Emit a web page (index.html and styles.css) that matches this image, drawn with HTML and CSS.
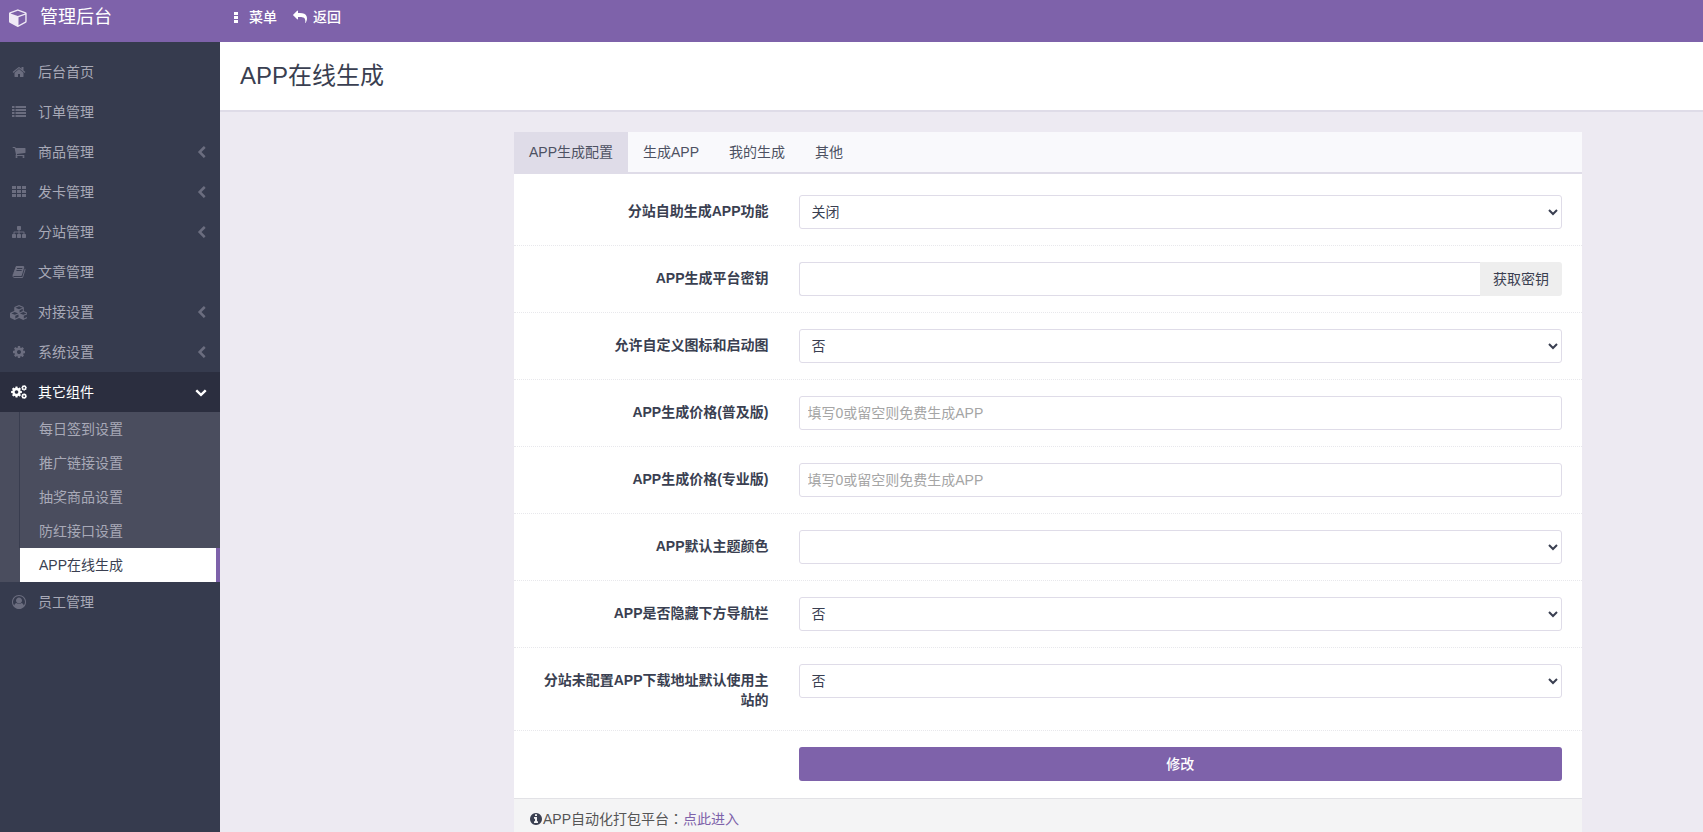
FILE: index.html
```html
<!DOCTYPE html>
<html lang="zh-CN">
<head>
<meta charset="utf-8">
<title>APP在线生成</title>
<link rel="stylesheet" href="styles.css">
</head>
<body>
<svg class="sprite" aria-hidden="true">
  <symbol id="i-cube" viewBox="0 0 1792 1792"><path d="M896 1629l640-349v-636l-640 233v752zm-64-865l698-254-698-254-698 254zm832-252v768q0 35-18 65t-49 47l-704 384q-28 16-61 16t-61-16l-704-384q-31-17-49-47t-18-65v-768q0-40 23-73t61-47l704-256q22-8 44-8t44 8l704 256q38 14 61 47t23 73z"/><polygon points="220,640 840,870 840,1640 220,1290" opacity=".75"/></symbol>
  <symbol id="i-reply" viewBox="0 0 1792 1792"><path d="M1792 1120q0 166-127 451-3 7-10.5 24t-13.5 30-13 22q-12 17-28 17-15 0-23.5-10t-8.5-25q0-9 2.5-26.5t2.5-23.5q5-68 5-123 0-101-17.5-181t-48.5-138.5-80-101-105.5-69.5-133-42.5-154-21.5-175.5-6h-224v256q0 26-19 45t-45 19-45-19l-512-512q-19-19-19-45t19-45l512-512q19-19 45-19t45 19 19 45v256h224q713 0 875 403 53 134 53 333z"/></symbol>
  <symbol id="i-dots" viewBox="0 0 4 11"><rect x="0" y="0" width="4" height="3"/><rect x="0" y="4" width="4" height="3"/><rect x="0" y="8" width="4" height="3"/></symbol>
  <symbol id="i-home" viewBox="0 0 1792 1792"><path d="M1472 992v480q0 26-19 45t-45 19h-384v-384h-256v384h-384q-26 0-45-19t-19-45v-480q0-1 .5-3t.5-3l575-474 575 474q1 2 1 6zm223-69l-62 74q-8 9-21 11h-3q-13 0-21-7l-692-577-692 577q-12 8-24 7-13-2-21-11l-62-74q-8-10-7-23.5t11-21.5l719-599q32-26 76-26t76 26l244 204v-195q0-14 9-23t23-9h192q14 0 23 9t9 23v408l219 182q10 8 11 21.5t-7 23.5z"/></symbol>
  <symbol id="i-list" viewBox="0 0 14 14"><rect y="1" width="2.500" height="2"/><rect x="3.500" y="1" width="10.500" height="2"/><rect y="4" width="2.500" height="2"/><rect x="3.500" y="4" width="10.500" height="2"/><rect y="7" width="2.500" height="2"/><rect x="3.500" y="7" width="10.500" height="2"/><rect y="10" width="2.500" height="2"/><rect x="3.500" y="10" width="10.500" height="2"/></symbol>
  <symbol id="i-cart" viewBox="0 0 1792 1792"><path d="M704 1536q0 52-38 90t-90 38-90-38-38-90 38-90 90-38 90 38 38 90zm896 0q0 52-38 90t-90 38-90-38-38-90 38-90 90-38 90 38 38 90zm128-1088v512q0 24-16.500 42.500t-40.500 21.500l-1044 122q13 60 13 70 0 16-24 64h920q26 0 45 19t19 45-19 45-45 19h-1024q-26 0-45-19t-19-45q0-11 8-31.500t16-36 21.500-40 15.500-29.500l-177-823h-204q-26 0-45-19t-19-45 19-45 45-19h256q16 0 28.500 6.500t19.500 15.500 13 24.500 8 26 5.500 29.500 4.500 26h1201q26 0 45 19t19 45z"/></symbol>
  <symbol id="i-th" viewBox="0 0 14 14"><rect y="1" width="4" height="3"/><rect x="5" y="1" width="4" height="3"/><rect x="10" y="1" width="4" height="3"/><rect y="5" width="4" height="3"/><rect x="5" y="5" width="4" height="3"/><rect x="10" y="5" width="4" height="3"/><rect y="9" width="4" height="3"/><rect x="5" y="9" width="4" height="3"/><rect x="10" y="9" width="4" height="3"/></symbol>
  <symbol id="i-sitemap" viewBox="0 0 1792 1792"><path d="M1792 1248v320q0 40-28 68t-68 28h-320q-40 0-68-28t-28-68v-320q0-40 28-68t68-28h96v-192h-512v192h96q40 0 68 28t28 68v320q0 40-28 68t-68 28h-320q-40 0-68-28t-28-68v-320q0-40 28-68t68-28h96v-192h-512v192h96q40 0 68 28t28 68v320q0 40-28 68t-68 28h-320q-40 0-68-28t-28-68v-320q0-40 28-68t68-28h96v-192q0-52 38-90t90-38h512v-192h-96q-40 0-68-28t-28-68v-320q0-40 28-68t68-28h320q40 0 68 28t28 68v320q0 40-28 68t-68 28h-96v192h512q52 0 90 38t38 90v192h96q40 0 68 28t28 68z"/></symbol>
  <symbol id="i-book" viewBox="0 0 1792 1792"><path d="M1703 478q40 57 18 129l-275 906q-19 64-76.500 107.500t-122.500 43.500h-923q-77 0-148.500-53.500t-99.500-131.500q-24-67-2-127 0-4 3-27t4-37q1-8-3-21.500t-3-19.500q2-11 8-21t16.500-23.500 16.500-23.500q23-38 45-91.500t30-91.500q3-10 .5-30t-.5-28q3-11 17-28t17-23q21-36 42-92t25-90q1-9-2.500-32t.5-28q4-13 22-30.500t22-22.500q19-26 42.500-84.500t27.500-96.500q1-8-3-25.500t-2-26.500q2-8 9-18t18-23 17-21q8-12 16.500-30.500t15-35 16-36 19.500-32 26.500-23.500 36-11.500 47.500 5.500l-1 3q38-9 51-9h761q74 0 114 56t18 130l-274 906q-36 119-71.500 153.500t-128.500 34.500h-869q-27 0-38 15-11 16-1 43 24 70 144 70h923q29 0 56-15.500t35-41.500l300-987q7-22 5-57 38 15 59 43zm-1064 2q-4 13 2 22.500t20 9.500h608q13 0 25.500-9.500t16.500-22.500l21-64q4-13-2-22.500t-20-9.500h-608q-13 0-25.500 9.500t-16.500 22.500zm-83 256q-4 13 2 22.500t20 9.500h608q13 0 25.500-9.500t16.500-22.500l21-64q4-13-2-22.500t-20-9.500h-608q-13 0-25.500 9.500t-16.500 22.500z"/></symbol>
  <symbol id="i-cubes" viewBox="0 0 2048 1792"><path d="M640 1632l384-192v-314l-384 164v342zm-64-454l404-173-404-173-404 173zm1088 454l384-192v-314l-384 164v342zm-64-454l404-173-404-173-404 173zm-448-293l384-165v-266l-384 164v267zm-64-379l441-189-441-189-441 189zm1088 518v416q0 36-19 67t-52 47l-448 224q-25 14-57 14t-57-14l-448-224q-4-2-7-4-2 2-7 4l-448 224q-25 14-57 14t-57-14l-448-224q-33-16-52-47t-19-67v-416q0-38 21.500-70t56.500-48l434-186v-400q0-38 21.500-70t56.500-48l448-192q23-10 50-10t50 10l448 192q35 16 56.500 48t21.500 70v400l434 186q36 16 57 48t21 70z"/></symbol>
  <symbol id="i-cog" viewBox="0 0 1792 1792"><path d="M1152 896q0-106-75-181t-181-75-181 75-75 181 75 181 181 75 181-75 75-181zm512-109v222q0 12-8 23t-20 13l-185 28q-19 54-39 91 35 50 107 138 10 12 10 25t-9 23q-27 37-99 108t-94 71q-12 0-26-9l-138-108q-44 23-91 38-16 136-29 186-7 28-36 28h-222q-14 0-24.500-8.500t-11.500-21.500l-28-184q-49-16-90-37l-141 107q-10 9-25 9-14 0-25-11-126-114-165-168-7-10-7-23 0-12 8-23 15-21 51-66.500t54-70.500q-27-50-41-99l-183-27q-13-2-21-12.500t-8-23.500v-222q0-12 8-23t19-13l186-28q14-46 39-92-40-57-107-138-10-12-10-24 0-10 9-23 26-36 98.500-107.500t94.500-71.500q13 0 26 10l138 107q44-23 91-38 16-136 29-186 7-28 36-28h222q14 0 24.500 8.500t11.500 21.500l28 184q49 16 90 37l142-107q9-9 24-9 13 0 25 10 129 119 165 170 7 8 7 22 0 12-8 23-15 21-51 66.500t-54 70.500q26 50 41 98l183 28q13 2 21 12.500t8 23.500z"/></symbol>
  <symbol id="i-cogs" viewBox="0 0 16 14" overflow="visible"><use href="#i-cog" x="-0.800" y="0.700" width="12.600" height="12.600"/><use href="#i-cog" x="9.800" y="-0.500" width="6.600" height="6.600"/><use href="#i-cog" x="9.800" y="7.800" width="6.600" height="6.600"/></symbol>
  <symbol id="i-user" viewBox="0 0 1792 1792"><path d="M896 0q182 0 348 71t286 191 191 286 71 348q0 181-70.500 347t-190.500 286-286 191.500-349 71.500-349-71-285.500-191.500-190.500-286-71-347.500 71-348 191-286 286-191 348-71zm619 1351q149-205 149-455 0-156-61-298t-164-245-245-164-298-61-298 61-245 164-164 245-61 298q0 250 149 455 66-327 306-327 131 128 313 128t313-128q240 0 306 327zm-235-647q0-159-112.500-271.500t-271.500-112.500-271.500 112.500-112.500 271.500 112.500 271.500 271.500 112.500 271.500-112.500 112.500-271.500z"/></symbol>
  <symbol id="i-left" viewBox="0 0 1792 1792"><path d="M1427 301l-531 531 531 531q19 19 19 45t-19 45l-166 166q-19 19-45 19t-45-19l-742-742q-19-19-19-45t19-45l742-742q19-19 45-19t45 19l166 166q19 19 19 45t-19 45z"/></symbol>
  <symbol id="i-down" viewBox="0 0 1792 1792"><path d="M1683 808l-742 741q-19 19-45 19t-45-19l-742-741q-19-19-19-45.500t19-45.500l166-165q19-19 45-19t45 19l531 531 531-531q19-19 45-19t45 19l166 165q19 19 19 45.500t-19 45.500z"/></symbol>
  <symbol id="i-info" viewBox="0 0 1792 1792"><path d="M1152 1376v-160q0-14-9-23t-23-9h-96v-512q0-14-9-23t-23-9h-320q-14 0-23 9t-9 23v160q0 14 9 23t23 9h96v320h-96q-14 0-23 9t-9 23v160q0 14 9 23t23 9h448q14 0 23-9t9-23zm-128-896v-160q0-14-9-23t-23-9h-192q-14 0-23 9t-9 23v160q0 14 9 23t23 9h192q14 0 23-9t9-23zm640 416q0 209-103 385.500t-279.500 279.500-385.500 103-385.500-103-279.500-279.500-103-385.500 103-385.500 279.500-279.500 385.500-103 385.500 103 279.500 279.500 103 385.500z"/></symbol>
</svg>

<div class="app">
  <header class="topbar">
    <a class="brand" href="#">
      <svg class="brand-icon"><use href="#i-cube"/></svg>
      <span class="brand-name">管理后台</span>
    </a>
    <nav class="topnav">
      <a class="topnav-link" href="#"><svg class="dots-icon"><use href="#i-dots"/></svg>菜单</a>
      <a class="topnav-link" href="#"><svg class="reply-icon"><use href="#i-reply"/></svg>返回</a>
    </nav>
  </header>

  <aside class="sidebar">
    <ul class="menu">
      <li><a class="menu-item" href="#"><svg class="menu-icon"><use href="#i-home"/></svg>后台首页</a></li>
      <li><a class="menu-item" href="#"><svg class="menu-icon"><use href="#i-list"/></svg>订单管理</a></li>
      <li><a class="menu-item" href="#"><svg class="menu-icon"><use href="#i-cart"/></svg>商品管理<svg class="chev"><use href="#i-left"/></svg></a></li>
      <li><a class="menu-item" href="#"><svg class="menu-icon"><use href="#i-th"/></svg>发卡管理<svg class="chev"><use href="#i-left"/></svg></a></li>
      <li><a class="menu-item" href="#"><svg class="menu-icon"><use href="#i-sitemap"/></svg>分站管理<svg class="chev"><use href="#i-left"/></svg></a></li>
      <li><a class="menu-item" href="#"><svg class="menu-icon"><use href="#i-book"/></svg>文章管理</a></li>
      <li><a class="menu-item" href="#"><svg class="menu-icon menu-icon-wide"><use href="#i-cubes"/></svg>对接设置<svg class="chev"><use href="#i-left"/></svg></a></li>
      <li><a class="menu-item" href="#"><svg class="menu-icon"><use href="#i-cog"/></svg>系统设置<svg class="chev"><use href="#i-left"/></svg></a></li>
      <li>
        <a class="menu-item is-open" href="#"><svg class="menu-icon menu-icon-cogs"><use href="#i-cogs"/></svg>其它组件<svg class="chev chev-down"><use href="#i-down"/></svg></a>
        <ul class="submenu">
          <li><a class="sub-item" href="#">每日签到设置</a></li>
          <li><a class="sub-item" href="#">推广链接设置</a></li>
          <li><a class="sub-item" href="#">抽奖商品设置</a></li>
          <li><a class="sub-item" href="#">防红接口设置</a></li>
          <li><a class="sub-item is-current" href="#">APP在线生成</a></li>
        </ul>
      </li>
      <li><a class="menu-item" href="#"><svg class="menu-icon"><use href="#i-user"/></svg>员工管理</a></li>
    </ul>
  </aside>

  <main class="main">
    <div class="page-head"><h1 class="page-title">APP在线生成</h1></div>
    <div class="content">
      <section class="card">
        <ul class="tabs">
          <li class="tab is-active">APP生成配置</li>
          <li class="tab">生成APP</li>
          <li class="tab">我的生成</li>
          <li class="tab">其他</li>
        </ul>
        <form class="form">
          <div class="row">
            <label class="row-label">分站自助生成APP功能</label>
            <select class="control"><option>关闭</option></select>
          </div>
          <div class="row">
            <label class="row-label">APP生成平台密钥</label>
            <div class="input-group">
              <input class="control control-joined" type="text">
              <a class="addon" href="#">获取密钥</a>
            </div>
          </div>
          <div class="row">
            <label class="row-label">允许自定义图标和启动图</label>
            <select class="control"><option>否</option></select>
          </div>
          <div class="row">
            <label class="row-label">APP生成价格(普及版)</label>
            <input class="control" type="text" placeholder="填写0或留空则免费生成APP">
          </div>
          <div class="row">
            <label class="row-label">APP生成价格(专业版)</label>
            <input class="control" type="text" placeholder="填写0或留空则免费生成APP">
          </div>
          <div class="row">
            <label class="row-label">APP默认主题颜色</label>
            <select class="control"><option></option></select>
          </div>
          <div class="row">
            <label class="row-label">APP是否隐藏下方导航栏</label>
            <select class="control"><option>否</option></select>
          </div>
          <div class="row">
            <label class="row-label">分站未配置APP下载地址默认使用主站的</label>
            <select class="control"><option>否</option></select>
          </div>
          <div class="row row-submit">
            <span></span>
            <button class="submit" type="button">修改</button>
          </div>
        </form>
        <div class="card-foot">
          <svg class="info-icon"><use href="#i-info"/></svg><span>APP自动化打包平台<span class="colon" lang="zh-TW">：</span><a class="foot-link" href="#">点此进入</a></span>
        </div>
      </section>
    </div>
  </main>
</div>
</body>
</html>
```

FILE: styles.css
```css
* { box-sizing: border-box; }
html, body { margin: 0; height: 100%; overflow: hidden; }
body {
  font: 14px/20px "Liberation Sans", "Noto Sans CJK SC", sans-serif;
  color: #3a3f51;
  background: #edeaf2;
}
a { color: inherit; text-decoration: none; }
ul { list-style: none; margin: 0; padding: 0; }
svg { fill: currentColor; flex: none; }
.sprite { display: none; }

.app {
  display: grid;
  grid-template-columns: 220px 1fr;
  grid-template-rows: 42px 1fr;
  height: 100vh;
}

/* top bar */
.topbar {
  grid-column: 1 / -1;
  display: flex;
  background: #7e62aa;
  color: #fff;
}
.brand {
  width: 220px;
  height: 34px;
  display: flex;
  align-items: center;
  padding-left: 9px;
}
.brand-icon { width: 19px; height: 19px; color: #efeaf5; margin-right: 12px; }
.brand-name { font-size: 18px; }
.topnav { display: flex; height: 34px; padding-left: 14px; }
.topnav-link { display: flex; align-items: center; font-weight: 500; margin-right: 16px; }
.dots-icon { width: 4px; height: 11px; margin-right: 11px; }
.reply-icon { width: 14px; height: 14px; margin-right: 6px; }

/* sidebar */
.sidebar { background: #363b4e; color: #a8a9b7; padding-top: 10px; }
.menu-item {
  display: flex;
  align-items: center;
  height: 40px;
  padding-left: 12px;
}
.menu-icon { width: 14px; height: 14px; margin-right: 12px; color: #6b6d7f; }
.menu-icon-wide { width: 17px; height: 15px; margin-left: -2px; margin-right: 11px; }
.menu-icon-cogs { width: 16px; margin-left: -1px; margin-right: 11px; color: #fff; overflow: visible; }
.chev { width: 13px; height: 13px; margin-left: auto; margin-right: 12px; color: #6b6d7f; }
.chev-down { width: 12px; height: 12px; margin-right: 13px; color: #fff; }
.menu-item.is-open { background: #2b2e3f; color: #fff; }
.submenu { background: #4a4d5e; padding-left: 19px; }
.sub-item {
  display: block;
  height: 34px;
  line-height: 34px;
  padding-left: 19px;
  border-left: 1px solid #393d4f;
}
.sub-item.is-current {
  background: #fff;
  color: #3a3f51;
  border-left-color: #4a4d5e;
  border-right: 4px solid #7e62aa;
}

/* main */
.main { min-width: 0; overflow: hidden; }
.page-head {
  height: 70px;
  padding: 17px 20px 0;
  background: #fff;
  border-bottom: 2px solid #dfdce8;
}
.page-title { margin: 0; font-size: 24px; line-height: 34px; font-weight: 400; }
.content { padding: 20px 121px 0 294px; }
.card { background: #fff; border-radius: 2px 2px 0 0; }

.tabs {
  display: flex;
  background: #f9f9fc;
  border-bottom: 2px solid #dfdce8;
}
.tab { height: 42px; margin-bottom: -2px; padding: 10px 15px; color: #4d5162; }
.tab.is-active { background: #dfdce8; }

.form { padding-top: 21px; }
.row {
  display: grid;
  grid-template-columns: 234.5px 1fr;
  column-gap: 30px;
  padding: 0 20px 16px;
  margin-bottom: 16px;
  border-bottom: 1px dotted #e8e8ec;
}
.row-label { padding: 6px 0 4px; text-align: right; font-weight: 700; }
.control {
  width: 100%;
  height: 34px;
  padding: 6px 8px;
  font: inherit;
  color: #3a3f51;
  background: #fff;
  border: 1px solid #dfdce8;
  border-radius: 3px;
  outline: 0;
}
.control::placeholder { color: #a5a5a5; opacity: 1; }
.input-group { display: flex; }
.control-joined { flex: 1; min-width: 0; border-radius: 3px 0 0 3px; border-right: 0; }
.addon {
  flex: none;
  width: 82px;
  height: 34px;
  line-height: 34px;
  text-align: center;
  background: #eee;
  border-radius: 0 3px 3px 0;
}
.row-submit { padding-bottom: 17px; margin-bottom: 0; border-bottom: 0; }
.submit {
  height: 34px;
  padding: 0;
  font: 500 14px/20px "Liberation Sans", "Noto Sans CJK SC", sans-serif;
  color: #fff;
  background: #7e62aa;
  border: 0;
  border-radius: 3px;
}

.card-foot {
  display: flex;
  align-items: center;
  height: 40px;
  padding: 0 15px 0;
  background: #f4f4f5;
  border-top: 1px solid #e2e2e6;
  color: #555;
}
.info-icon { width: 14px; height: 14px; color: #3a3f51; }
.colon { font-family: "Noto Sans CJK TC", sans-serif; }
.foot-link { color: #7e62aa; }
```
